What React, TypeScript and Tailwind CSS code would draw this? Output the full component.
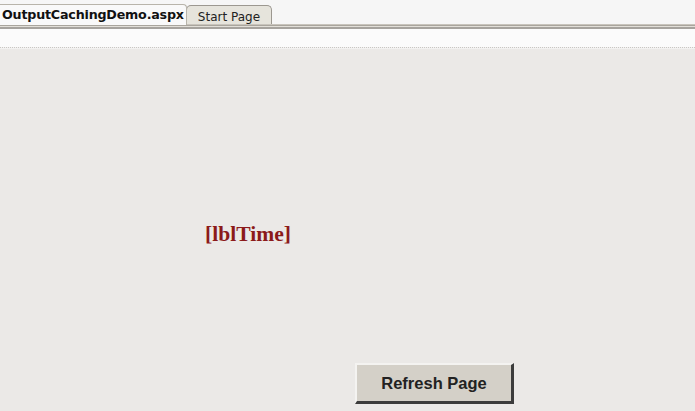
import React from "react";

const App: React.FC = () => {
  return (
    <div className="w-[695px] h-[411px] flex flex-col overflow-hidden bg-[#ebe9e7]">
      {/* tab strip */}
      <div className="h-[24px] bg-[#f6f6f6] flex items-end pl-0">
        <div className="h-[21px] px-[2px] flex items-center bg-[#f9f9f9] border-t border-r border-[#b8b4aa] rounded-tr-[4px] relative z-10 -mb-[1px]">
          <span className="font-['DejaVu_Sans',sans-serif] font-bold text-[12.7px] leading-none text-[#111] tracking-[-0.2px]">
            OutputCachingDemo.aspx
          </span>
        </div>
        <div className="h-[19px] pl-[11px] pr-[11px] flex items-center bg-[#e6e4dc] border-t border-r border-l border-[#9c9890] rounded-t-[5px] -ml-[1px]">
          <span className="font-['DejaVu_Sans',sans-serif] text-[12px] leading-none text-[#222] mt-[3px]">
            Start Page
          </span>
        </div>
      </div>
      {/* underline bars */}
      <div className="h-[1px] bg-[#c8c4bc]" />
      <div className="h-[1px] bg-[#a9a59d]" />
      <div className="h-[1px] bg-[#e2dfd8]" />
      <div className="h-[2px] bg-[#a6a39e]" />
      <div className="h-[18px] bg-[#fbfbfb]" />
      <div className="h-[2px] border-t border-dotted border-[#c9c7c4] bg-[#f3f2f1]" />
      {/* design surface */}
      <div className="flex-1 flex flex-col">
        <div className="mt-[173px] ml-[205px] font-['Liberation_Serif',serif] font-bold text-[21.6px] leading-[24px] text-[#8b1a1a]">
          [lblTime]
        </div>
        <div className="mt-[117px] ml-[355px]">
          <button className="w-[159px] h-[41px] bg-[#d4d0c8] border-t-2 border-l-2 border-b-[3px] border-r-[3px] border-t-[#f4f3f1] border-l-[#f4f3f1] border-b-[#3c3c3c] border-r-[#3c3c3c] font-['Liberation_Sans',sans-serif] font-bold text-[16.5px] text-[#222] flex items-center justify-center">
            Refresh Page
          </button>
        </div>
      </div>
    </div>
  );
};

export default App;
